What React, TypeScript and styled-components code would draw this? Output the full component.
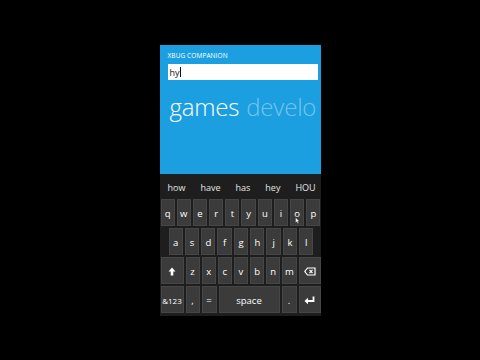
import React from 'react';
import styled, { createGlobalStyle } from 'styled-components';

const GlobalStyle = createGlobalStyle`
  html, body {
    margin: 0;
    padding: 0;
    background: #000;
  }
  body {
    font-family: 'Open Sans', 'Noto Sans', sans-serif;
  }
`;

const Stage = styled.div`
  width: 480px;
  height: 360px;
  display: flex;
  justify-content: center;
  padding-top: 45px;
  box-sizing: border-box;
  background: #000;
`;

const Phone = styled.div`
  width: 161px;
  height: 271px;
  display: flex;
  flex-direction: column;
`;

const AppArea = styled.div`
  height: 132px;
  background: #1c9fe0;
  padding: 7px 3px 0 8px;
  box-sizing: border-box;
  display: flex;
  flex-direction: column;
`;

const AppTitle = styled.div`
  font-size: 6.5px;
  color: #fff;
  letter-spacing: 0.1px;
  line-height: 8px;
  text-transform: uppercase;
`;

const SearchBox = styled.div`
  margin-top: 4px;
  height: 16px;
  width: 150px;
  background: #fff;
  display: flex;
  align-items: center;
  padding-left: 2px;
  box-sizing: border-box;
  font-size: 9px;
  color: #111;
`;

const Caret = styled.span`
  display: inline-block;
  width: 1px;
  height: 10px;
  background: #111;
  margin-left: 0.5px;
`;

const Pivot = styled.div`
  margin-top: 12px;
  padding-left: 2px;
  display: flex;
  gap: 7px;
  white-space: nowrap;
  overflow: hidden;
  font-size: 24px;
  font-weight: 300;
  line-height: 30px;
  letter-spacing: -0.2px;
`;

const PivotItem = styled.span<{ $active?: boolean }>`
  color: ${(p) => (p.$active ? '#fff' : 'rgba(255,255,255,0.4)')};
`;

const Keyboard = styled.div`
  flex: 1;
  background: #1e1e1e;
  display: flex;
  flex-direction: column;
  padding-bottom: 1px;
`;

const Suggestions = styled.div`
  height: 25px;
  display: flex;
  align-items: center;
  gap: 15px;
  padding: 2px 0 0 8px;
  box-sizing: border-box;
  font-size: 9px;
  color: #e6e6e6;
  white-space: nowrap;
  overflow: hidden;
`;

const KeyRow = styled.div<{ $cols: string; $pad?: string }>`
  display: grid;
  grid-template-columns: ${(p) => p.$cols};
  gap: 2px;
  height: 27px;
  padding: ${(p) => p.$pad || '0 0 0 1px'};
  margin-bottom: 2px;
`;

const Key = styled.div<{ $small?: boolean }>`
  position: relative;
  background: #3b3b3b;
  border: 1px solid #464646;
  box-sizing: border-box;
  display: flex;
  align-items: center;
  justify-content: center;
  color: #fff;
  font-size: ${(p) => (p.$small ? '8px' : '9.5px')};
  padding-top: 2px;
`;

const Pointer = styled.svg`
  position: absolute;
  left: 4px;
  bottom: 1px;
`;

const ShiftIcon = () => (
  <svg width="8" height="9" viewBox="0 0 8 9">
    <path d="M4 0.5 L7.5 4.5 L5.3 4.5 L5.3 8.5 L2.7 8.5 L2.7 4.5 L0.5 4.5 Z" fill="#fff" />
  </svg>
);

const BackspaceIcon = () => (
  <svg width="12" height="9" viewBox="0 0 12 9">
    <path d="M3.5 1 L11 1 L11 8 L3.5 8 L0.8 4.5 Z" fill="none" stroke="#fff" strokeWidth="1.2" />
    <path d="M5.5 2.8 L8.5 6.2 M8.5 2.8 L5.5 6.2" stroke="#fff" strokeWidth="1.2" />
  </svg>
);

const EnterIcon = () => (
  <svg width="11" height="9" viewBox="0 0 11 9">
    <path d="M9.5 0.5 L9.5 5 L2.5 5" fill="none" stroke="#fff" strokeWidth="1.8" />
    <path d="M0.5 5 L4 1.8 L4 8.2 Z" fill="#fff" />
  </svg>
);

const row1 = ['q', 'w', 'e', 'r', 't', 'y', 'u', 'i', 'o', 'p'];
const row2 = ['a', 's', 'd', 'f', 'g', 'h', 'j', 'k', 'l'];
const row3 = ['z', 'x', 'c', 'v', 'b', 'n', 'm'];
const words = ['how', 'have', 'has', 'hey', 'HOU'];

const App: React.FC = () => {
  return (
    <>
      <GlobalStyle />
      <Stage>
        <Phone>
          <AppArea>
            <AppTitle>XBUG COMPANION</AppTitle>
            <SearchBox>
              hy
              <Caret />
            </SearchBox>
            <Pivot>
              <PivotItem $active>games</PivotItem>
              <PivotItem>develo</PivotItem>
            </Pivot>
          </AppArea>
          <Keyboard>
            <Suggestions>
              {words.map((w) => (
                <span key={w}>{w}</span>
              ))}
            </Suggestions>
            <KeyRow $cols="repeat(10, 1fr)">
              {row1.map((k) => (
                <Key key={k}>
                  {k}
                  {k === 'o' && (
                    <Pointer width="5" height="7" viewBox="0 0 5 7">
                      <path d="M0.5 0.5 L0.5 6 L1.8 4.8 L3 6.8 L3.8 6.3 L2.7 4.3 L4.5 4.3 Z" fill="#fff" stroke="#222" strokeWidth="0.4" />
                    </Pointer>
                  )}
                </Key>
              ))}
            </KeyRow>
            <KeyRow $cols="repeat(9, 1fr)" $pad="0 7px 0 9px">
              {row2.map((k) => (
                <Key key={k}>{k}</Key>
              ))}
            </KeyRow>
            <KeyRow $cols="23px repeat(7, 1fr) 22px">
              <Key>
                <ShiftIcon />
              </Key>
              {row3.map((k) => (
                <Key key={k}>{k}</Key>
              ))}
              <Key>
                <BackspaceIcon />
              </Key>
            </KeyRow>
            <KeyRow $cols="23px 14px 15px 1fr 15px 22px">
              <Key $small>&amp;123</Key>
              <Key>,</Key>
              <Key>=</Key>
              <Key>space</Key>
              <Key>.</Key>
              <Key>
                <EnterIcon />
              </Key>
            </KeyRow>
          </Keyboard>
        </Phone>
      </Stage>
    </>
  );
};

export default App;
